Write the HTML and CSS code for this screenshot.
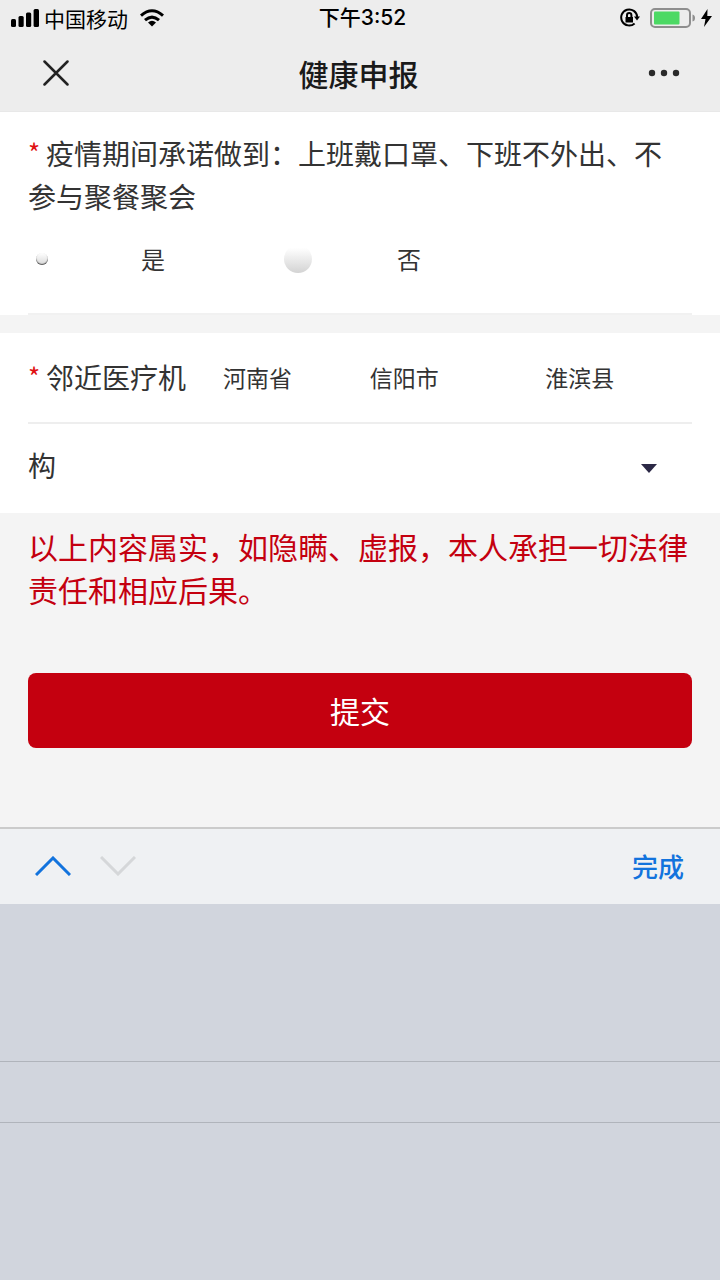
FILE: index.html
```html
<!DOCTYPE html>
<html lang="zh-CN">
<head>
<meta charset="utf-8">
<meta name="viewport" content="width=device-width, initial-scale=1">
<title>健康申报</title>
<link rel="stylesheet" href="styles.css">
</head>
<body>
<div class="screen">
  <header class="header">
    <div class="status">
      <div class="status-left">
        <svg width="28" height="18" viewBox="0 0 28 18" aria-hidden="true"><rect x="0" y="10" width="5" height="8" rx="1.5"/><rect x="7.5" y="7" width="5.2" height="11" rx="1.5"/><rect x="15" y="3.500" width="5.200" height="14.500" rx="1.500"/><rect x="22.600" y="0" width="5.400" height="18" rx="1.500"/></svg>
        <span class="carrier">中国移动</span>
        <svg class="wifi" width="26" height="18" viewBox="0 0 26 18" aria-hidden="true"><path class="arc" d="M2 6.600Q13-3.200 24 6.600M6 11.200Q13 5 20 11.200"/><path d="M13 17.500l-4-4Q13 9.800 17 13.500z"/></svg>
      </div>
      <span class="time">下午3:52</span>
      <div class="status-right">
        <svg width="20" height="20" viewBox="0 0 20 20" aria-hidden="true"><path class="ring" d="M14.600 15.400A8 8 0 1 1 17.200 9"/><path d="M14 8.500h6l-3 4zM5.500 9h7.500v5.500H5.500z"/><path class="ring" d="M7 9V7.300a2.200 2.200 0 0 1 4.400 0V9"/></svg>
        <svg class="battery" width="46" height="20" viewBox="0 0 46 20" aria-hidden="true"><rect class="shell" x="1" y="1" width="39" height="18" rx="4"/><rect class="charge" x="4" y="3.500" width="25.500" height="13" rx="1"/><path class="tip" d="M42.500 6.500q2.500.5 2.500 3.500t-2.500 3.500z"/></svg>
        <svg width="11" height="18" viewBox="0 0 11 18" aria-hidden="true"><path d="M6.500 0L0 10h4.500L3 18 11 7H6.300z"/></svg>
      </div>
    </div>
    <nav class="nav">
      <button class="icon-button" type="button" aria-label="关闭"><svg width="26" height="26" viewBox="0 0 26 26"><path class="cross" d="M1.500 1.500l23 23M24.500 1.500l-23 23"/></svg></button>
      <h1 class="title">健康申报</h1>
      <button class="icon-button" type="button" aria-label="更多"><svg width="32" height="8" viewBox="0 0 32 8"><g fill="#2a2a2a"><circle cx="4" cy="4" r="3.200"/><circle cx="16" cy="4" r="3.200"/><circle cx="28" cy="4" r="3.200"/></g></svg></button>
    </nav>
  </header>

  <form class="form">
    <fieldset class="card promise">
      <legend class="question"><span class="required">*</span>疫情期间承诺做到：上班戴口罩、下班不外出、不参与聚餐聚会</legend>
      <div class="options">
        <label class="option"><input class="radio" type="radio" name="promise" value="yes" checked><span>是</span></label>
        <label class="option"><input class="radio" type="radio" name="promise" value="no"><span>否</span></label>
      </div>
    </fieldset>

    <section class="card clinic">
      <div class="clinic-grid">
        <label class="clinic-label" for="province"><span class="required">*</span>邻近医疗机构</label>
        <div class="regions">
          <select class="region" id="province" aria-label="省"><option>河南省</option></select>
          <select class="region" aria-label="市"><option>信阳市</option></select>
          <select class="region" aria-label="县"><option>淮滨县</option></select>
        </div>
        <div class="hospital">
          <select class="hospital-select" aria-label="医疗机构"><option value=""></option></select>
          <svg class="caret" width="16" height="9" viewBox="0 0 16 9" aria-hidden="true"><path d="M0 0h16L8 9z"/></svg>
        </div>
      </div>
    </section>

    <p class="notice">以上内容属实，如隐瞒、虚报，本人承担一切法律责任和相应后果。</p>
    <button class="submit" type="submit">提交</button>
  </form>

  <div class="toolbar">
    <div class="steps">
      <button class="icon-button" type="button" aria-label="上一项"><svg width="36" height="20" viewBox="0 0 36 20"><path class="chevron" d="M1 19L18 2l17 17"/></svg></button>
      <button class="icon-button" type="button" aria-label="下一项" disabled><svg width="36" height="20" viewBox="0 0 36 20"><path class="chevron chevron-off" d="M1 1l17 17L35 1"/></svg></button>
    </div>
    <button class="done" type="button">完成</button>
  </div>
  <div class="picker"><div class="picker-row"></div></div>
</div>
</body>
</html>
```

FILE: styles.css
```css
* { box-sizing: border-box; }

body {
  margin: 0;
  background: #f4f4f4;
  color: #333;
  font-family: "Noto Sans CJK SC", sans-serif;
}

button, select, input { font: inherit; color: inherit; }

button {
  padding: 0;
  border: 0;
  background: none;
}

svg { display: block; }

.screen {
  display: flex;
  flex-direction: column;
  min-height: 100vh;
}

.header {
  background: #ededed;
  color: #000;
  border-bottom: 1px solid #e8e8e8;
}

.status {
  display: grid;
  grid-template-columns: 1fr auto 1fr;
  align-items: center;
  height: 36px;
  padding: 0 8px 0 11px;
  font-size: 21px;
  line-height: 34px;
}

.status-left, .status-right {
  display: flex;
  align-items: center;
}

.status-left { gap: 5px; }
.wifi { margin-left: 6px; }

.status-right {
  justify-content: flex-end;
  gap: 10px;
}

.battery { margin-right: -5px; }

.time {
  padding-left: 2px;
  font-family: Inter, "Noto Sans CJK SC", sans-serif;
  font-size: 21px;
  font-weight: 500;
}

.arc { fill: none; stroke: #000; stroke-width: 3; }
.ring { fill: none; stroke: #000; stroke-width: 2; }
.shell { fill: none; stroke: #8e8e8e; stroke-width: 2; }
.charge { fill: #4cd964; }
.tip { fill: #8e8e8e; }

.nav {
  display: flex;
  align-items: center;
  justify-content: space-between;
  height: 75px;
  padding: 0 40px 2px 43px;
  color: #1a1a1a;
}

.cross { fill: none; stroke: #222; stroke-width: 2.500; stroke-linecap: round; }

.title {
  margin: 0;
  font-size: 30px;
  font-weight: 500;
  line-height: 44px;
}

.card {
  margin: 0;
  border: 0;
  background: #fff;
}

.promise {
  min-width: 0;
  padding: 20px 28px 0;
}

.question {
  float: left;
  width: 100%;
  padding: 0 20px 0 0;
  font-size: 28px;
  line-height: 43px;
}

.required {
  display: inline-block;
  width: 18px;
  color: #e01010;
  font-size: 26px;
  line-height: 1;
  vertical-align: 2px;
}

.options {
  clear: both;
  display: flex;
  height: 97px;
  padding-bottom: 14px;
  border-bottom: 2px solid #f1f1f1;
}

.option {
  display: flex;
  align-items: center;
  gap: 85px;
  width: 256px;
  font-size: 24px;
}

.radio {
  appearance: none;
  flex: none;
  width: 28px;
  height: 28px;
  margin: 0;
  border-radius: 50%;
  background: linear-gradient(#fff 10%, #d3d3d3);
}

.radio:checked {
  width: 12px;
  height: 12px;
  margin: 0 8px;
  background: linear-gradient(#fff, #d8d8d8);
  box-shadow: inset 0 -1px 1px #555;
}

.clinic {
  margin-top: 18px;
  padding: 0 28px;
}

.clinic-grid {
  display: grid;
  grid-template: 90px 90px / 165px 1fr;
  background: linear-gradient(#eee, #eee) center / 100% 2px no-repeat;
}

.clinic-label {
  grid-row: span 2;
  font-size: 28px;
  line-height: 88px;
}

.regions {
  display: grid;
  grid-template-columns: 146fr 175fr 146fr;
  align-items: center;
  padding: 0 0 3px 30px;
}

.region {
  appearance: none;
  padding: 0;
  border: 0;
  background: none;
  font-size: 23px;
}

.hospital {
  display: flex;
  align-items: center;
  padding-right: 35px;
}

.hospital-select {
  appearance: none;
  flex: 1;
  height: 60px;
  border: 0;
  background: none;
}

.caret { fill: #2b2845; }

.notice {
  margin: 0;
  padding: 12px 28px 0;
  color: #c4000f;
  font-size: 30px;
  line-height: 43px;
}

.submit {
  display: block;
  width: calc(100% - 56px);
  margin: 62px 28px 79px;
  height: 75px;
  padding-bottom: 2px;
  border-radius: 8px;
  background: #c4000f;
  color: #fff;
  font-size: 30px;
  line-height: 44px;
}

.toolbar {
  display: flex;
  align-items: center;
  justify-content: space-between;
  height: 77px;
  padding: 0 36px 2px 35px;
  border-top: 2px solid #cbcbcb;
  background: #eff1f3;
}

.steps { display: flex; gap: 29px; }

.chevron { fill: none; stroke: #1273dd; stroke-width: 3; }
.chevron-off { stroke: #d5d7d9; }

.done {
  color: #1273dd;
  font-size: 26px;
  font-weight: 500;
}

.picker {
  flex: 1;
  display: flex;
  align-items: center;
  background: #d1d5dd;
}

.picker-row {
  flex: 1;
  height: 62px;
  border: solid #b0b4bb;
  border-width: 1px 0;
}
```
